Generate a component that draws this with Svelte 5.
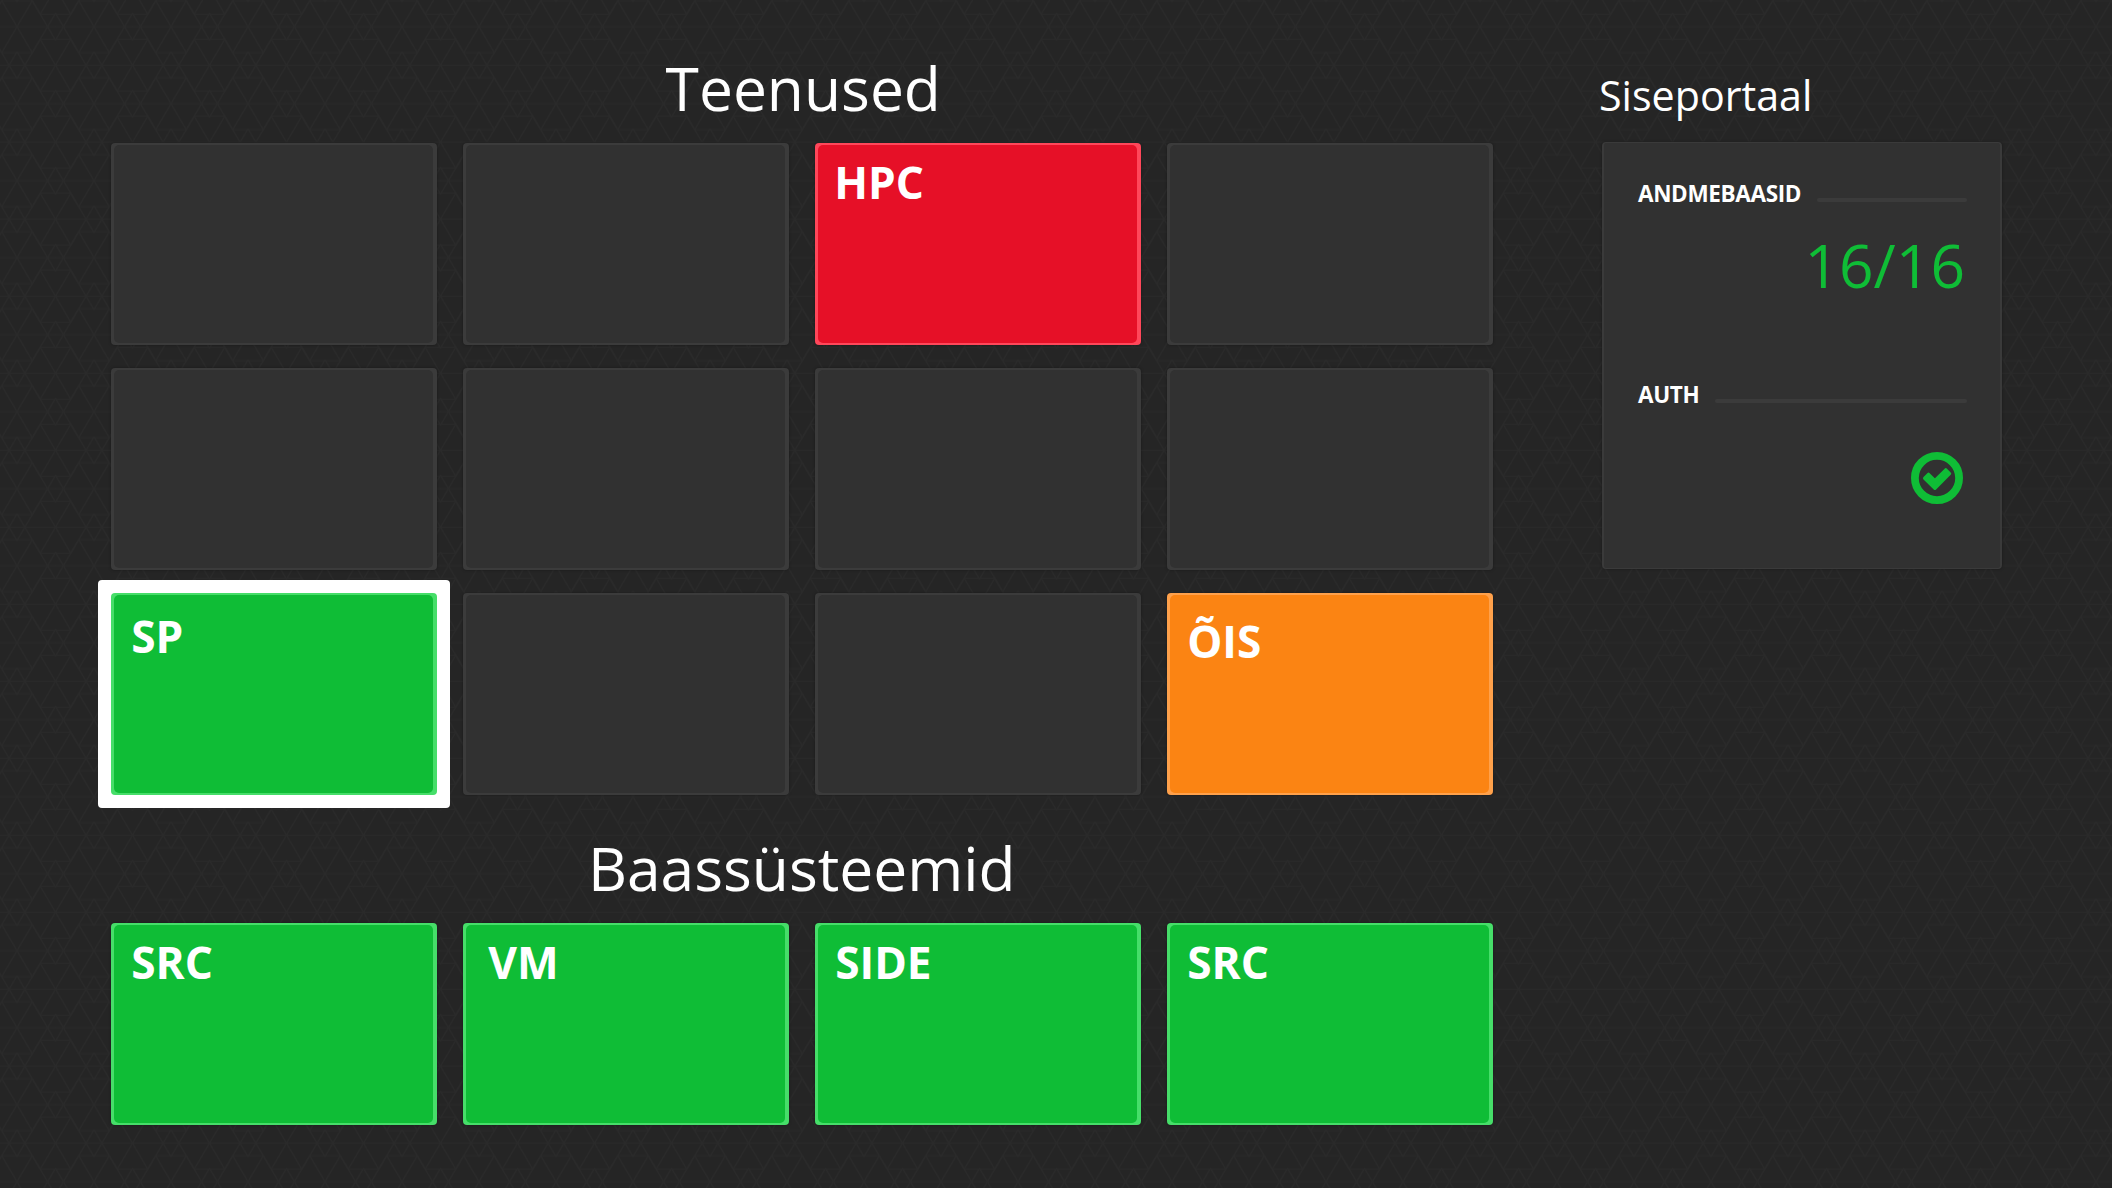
<script>
  const services = [
    {}, {}, { label: 'HPC', tone: 'red' }, {},
    {}, {}, {}, {},
    { label: 'SP', tone: 'green', selected: true }, {}, {}, { label: 'ÕIS', tone: 'orange', lowered: true }
  ];
  const systems = [
    { label: 'SRC', tone: 'green' },
    { label: 'VM', tone: 'green', shifted: true },
    { label: 'SIDE', tone: 'green' },
    { label: 'SRC', tone: 'green' }
  ];
  // Centres of the triangle stars that touch one pattern cell
  const stars = [[0, 0], [77, 0], [0, 77], [77, 77], [38.5, 38.5]];
</script>

{#snippet tile(t)}
  <div class="tile {t.tone ?? ''}" class:selected={t.selected} class:shifted={t.shifted} class:lowered={t.lowered}>
    <div class="face">{t.label ?? ''}</div>
  </div>
{/snippet}

<div class="page">
  <svg class="texture" aria-hidden="true">
    <defs>
      <pattern id="tri" width="77" height="77" patternUnits="userSpaceOnUse" patternTransform="translate(17 26.7)">
        <g fill="none" stroke="#2a2a2a" stroke-width="1.2">
          {#each stars as [x, y]}
            <path
              transform="translate({x} {y})"
              d="M-38.5 0H38.5M-15.3 -26L15.3 26M15.3 -26L-15.3 26M-15.3 -26H15.3M-15.3 26H15.3M15.3 -26L38.5 13.5M15.3 26L38.5 -13.5M-15.3 -26L-38.5 13.5M-15.3 26L-38.5 -13.5"
            />
          {/each}
        </g>
      </pattern>
    </defs>
    <rect width="100%" height="100%" fill="url(#tri)" />
  </svg>

  <main>
    <h1>Teenused</h1>
    <section class="grid">
      {#each services as t}{@render tile(t)}{/each}
    </section>
    <h1 class="second">Baassüsteemid</h1>
    <section class="grid">
      {#each systems as t}{@render tile(t)}{/each}
    </section>
  </main>

  <aside>
    <h2>Siseportaal</h2>
    <div class="panel">
      <div class="head"><span>ANDMEBAASID</span><i></i></div>
      <div class="count">16/16</div>
      <div class="head auth"><span>AUTH</span><i></i></div>
      <svg class="check" viewBox="0 0 52 52">
        <circle cx="26" cy="26" r="22.1" fill="none" stroke="#0fbd36" stroke-width="7.8" />
        <path d="M13.7 26.2L17.5 22.4L23.9 28.8L34.8 17.9L38.5 21.6L23.9 36.3Z" fill="#0fbd36" stroke="#0fbd36" stroke-width="3.4" stroke-linejoin="round" />
      </svg>
    </div>
  </aside>
</div>

<style>
  :global(body) {
    background: #252525;
    overflow: hidden;
  }
  .page {
    position: relative;
    box-sizing: border-box;
    width: 2112px;
    height: 1188px;
    display: flex;
    padding-left: 110.5px;
    background: #252525;
    color: #fff;
    font-family: 'Open Sans', sans-serif;
    font-kerning: none;
    overflow: hidden;
  }
  .texture {
    position: absolute;
    inset: 0;
    width: 100%;
    height: 100%;
  }
  main {
    position: relative;
    width: 1382.5px;
    padding-top: 47px;
  }
  h1 {
    box-sizing: border-box;
    margin: 0;
    height: 95.5px;
    padding-left: 3px;
    font-size: 60.5px;
    font-weight: 400;
    line-height: 82px;
    text-align: center;
  }
  .second {
    height: 127.5px;
    padding-top: 32px;
    padding-left: 0;
  }
  .grid {
    display: grid;
    grid-template-columns: repeat(4, 326.5px);
    grid-auto-rows: 202.5px;
    gap: 22.5px 25.5px;
  }
  .tile {
    --face: #313131;
    --rim: #3b3b3b;
    position: relative;
    box-sizing: border-box;
    padding: 2.5px 3.7px;
    border-radius: 4px;
    background: var(--rim);
    box-shadow: 0 0 3px rgb(0 0 0 / 0.35);
  }
  .face {
    box-sizing: border-box;
    height: 100%;
    padding: 6.5px 0 0 17px;
    border-radius: 5px;
    background: var(--face);
    font-size: 44.2px;
    font-weight: 700;
    line-height: 61px;
  }
  .red { --face: #e61027; --rim: #ff475a; }
  .red .face { padding-left: 16px; }
  .green { --face: #0fbd36; --rim: #46de69; }
  .orange { --face: #fb8413; --rim: #ffa14b; }
  .selected {
    z-index: 0;
    box-shadow: none;
  }
  /* White plate behind the selected tile, with the tile's own rim redrawn on it */
  .selected::before,
  .selected::after {
    content: '';
    position: absolute;
    z-index: -1;
  }
  .selected::before {
    inset: -13px;
    border-radius: 4px;
    background: #fff;
  }
  .selected::after {
    inset: 0;
    border-radius: 4px;
    background: var(--rim);
  }
  .selected .face { padding-top: 11px; }
  .shifted .face { padding-left: 22px; }
  .lowered .face { padding-top: 15.5px; }

  aside {
    position: relative;
    margin-left: 109px;
    padding-top: 66px;
    width: 400px;
  }
  h2 {
    margin: 0 0 0 -3px;
    height: 76px;
    font-size: 41.2px;
    font-weight: 400;
    line-height: 58px;
  }
  .panel {
    box-sizing: border-box;
    height: 427px;
    padding: 34px 33.5px 0 34px;
    border: 2px solid #3a3a3a;
    border-top-width: 1px;
    border-bottom-width: 1px;
    border-radius: 4px;
    background: #313131;
    box-shadow: 0 0 3px rgb(0 0 0 / 0.35);
    display: flex;
    flex-direction: column;
  }
  .head {
    display: flex;
    align-items: center;
    height: 32px;
    gap: 16px;
    font-size: 22.5px;
    font-weight: 700;
    letter-spacing: -0.35px;
  }
  .head i {
    flex: 1;
    height: 4px;
    margin-top: 13px;
    border-radius: 2px;
    background: #3b3b3b;
  }
  .count {
    margin-top: 15px;
    padding-right: 1.5px;
    text-align: right;
    color: #0fbd36;
    font-size: 60.5px;
    line-height: 82px;
  }
  .auth { margin-top: 72px; }
  .check {
    width: 52px;
    height: 52px;
    margin-top: 42px;
    margin-right: 4px;
    align-self: flex-end;
  }
</style>
